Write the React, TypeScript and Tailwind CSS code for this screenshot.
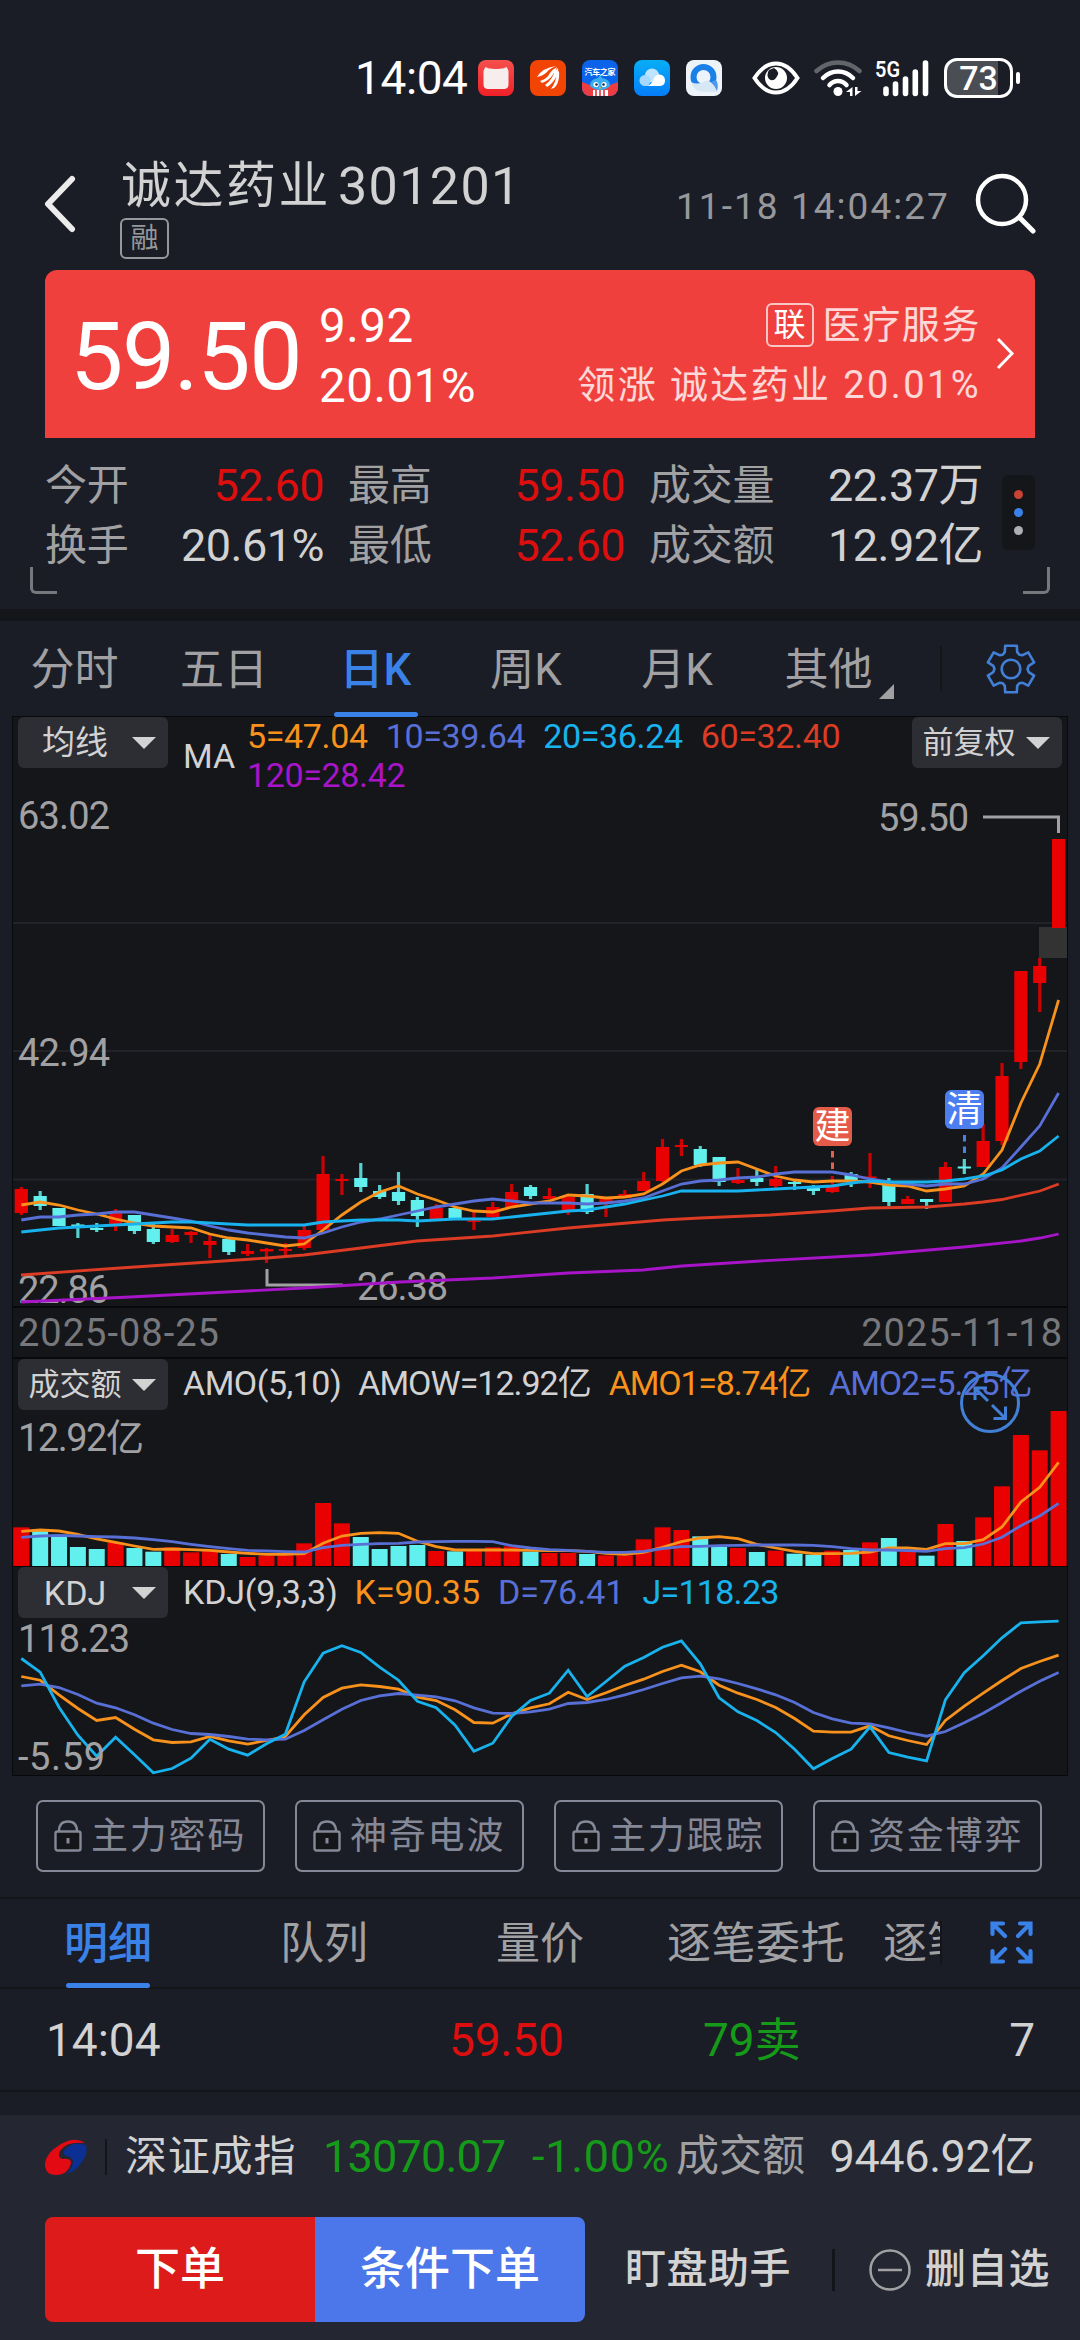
import type { ReactNode } from "react";

const STEP = 18.86;
const FIRST_X = 9.3;

const UP = "#e90000";
const DOWN = "#62f0ee";
const ORANGE = "#f8921c";
const INDIGO = "#5870d6";
const CYAN = "#18b3ee";

// open/close range, then low/high range, in chart pixels
type Candle = [number, number, number, number, "u" | "d"];

const candles: Candle[] = [
  [472, 496, 470, 498, "u"],
  [479, 489, 474, 493, "d"],
  [491, 509, 491, 509, "d"],
  [507.5, 509.5, 506, 521, "d"],
  [511, 513, 506, 515, "d"],
  [496, 508, 492, 514, "u"],
  [498, 514, 498, 517, "d"],
  [512, 525, 505, 527, "d"],
  [518, 525, 512, 526, "u"],
  [515, 518, 514, 526, "u"],
  [524, 528, 516, 541, "u"],
  [522, 535, 522, 538, "d"],
  [534, 537, 527, 539, "u"],
  [532, 534.5, 531, 546, "u"],
  [532, 534, 526, 538, "u"],
  [513, 531, 509, 533, "u"],
  [457, 513, 439, 513, "u"],
  [462, 464, 457, 478, "u"],
  [461, 470, 446, 475, "d"],
  [474, 480, 468, 482, "d"],
  [475, 484, 455, 488, "d"],
  [483, 499, 480, 510, "d"],
  [491, 502, 487, 502, "u"],
  [491, 502, 491, 502, "d"],
  [503.5, 505, 494, 513, "u"],
  [490, 500, 485, 503, "u"],
  [475, 490, 467, 490, "u"],
  [470, 479, 468, 482, "d"],
  [479, 482, 471, 482, "u"],
  [480, 494, 478, 498, "u"],
  [477, 495, 467, 497, "d"],
  [481, 486, 480, 500, "u"],
  [477, 481, 473, 481, "u"],
  [464, 474, 455, 474, "u"],
  [430, 464, 422, 465, "u"],
  [428, 430, 422, 439, "u"],
  [432, 448, 429, 450, "d"],
  [440, 465, 440, 469, "d"],
  [463, 466, 451, 467, "u"],
  [461, 465, 453, 469, "d"],
  [462, 469, 449, 473, "u"],
  [465, 467, 464, 473, "d"],
  [470, 474, 468, 478, "d"],
  [469, 475, 459, 476, "u"],
  [457, 464, 455, 470, "d"],
  [459.5, 461, 436, 471, "u"],
  [468, 485, 461, 489, "d"],
  [482, 487, 479, 487, "u"],
  [482, 485, 482, 492, "d"],
  [450, 485, 445, 485, "u"],
  [449.5, 451.5, 442, 457, "d"],
  [424, 450, 407, 450, "u"],
  [359, 424, 346, 428, "u"],
  [254, 345, 254, 352, "u"],
  [249, 266, 241, 295, "u"],
  [122, 211, 122, 211, "u"],
];

const ma5 = [
  488, 485, 488, 493, 497, 502, 506, 509, 510, 511, 517, 521, 523, 526, 529, 527, 513, 498, 485, 475, 469, 477, 483,
  490, 494, 495, 490, 487, 484, 478, 479, 481, 480, 477, 467, 454, 448, 446, 445, 452, 459, 463, 465, 464, 464, 465,
  468, 469, 474, 472, 469, 457, 433, 386, 347, 283,
];
const ma10 = [
  503, 500, 500, 498, 497, 495, 495, 498, 501, 504, 509, 513, 516, 518, 520, 521, 516, 510, 505, 502, 498, 494, 490,
  487, 484, 482, 484, 486, 486, 486, 487, 486, 484, 481, 474, 467, 464, 463, 461, 460, 457, 455, 455, 455, 458, 462,
  465, 467, 469, 467, 467, 462, 451, 430, 409, 376,
];
const ma20 = [
  515, 513, 511, 510, 509, 508, 507, 506, 505, 505, 506, 507, 508, 508, 508, 508, 505, 504, 503, 503, 503, 504, 503,
  502, 502, 502, 500, 498, 496, 494, 493, 490, 487, 483, 479, 474, 474, 474, 474, 473, 472, 471, 470, 469, 466, 464,
  465, 465, 465, 464, 462, 459, 453, 442, 434, 419,
];

// amount panel, three units to a pixel
const amounts = [
  116, 106, 89, 57, 51, 71, 54, 43, 56, 41, 47, 36, 27, 31, 32, 68, 189, 128, 87, 51, 60, 63, 45, 44, 45, 56, 59, 43,
  39, 39, 36, 32, 32, 80, 116, 108, 89, 57, 54, 42, 46, 37, 34, 46, 48, 71, 84, 43, 31, 126, 75, 146, 239, 393, 347,
  465,
];
const amo1 = [
  104, 108, 105, 95, 81, 71, 60, 50, 51, 49, 47, 42, 38, 35, 35, 37, 68, 90, 98, 100, 98, 74, 58, 48, 48, 48, 48, 47,
  46, 46, 44, 38, 35, 41, 56, 73, 84, 88, 82, 65, 54, 44, 37, 37, 38, 42, 54, 54, 50, 67, 67, 79, 117, 192, 236, 311,
];
const amo2 = [
  86, 90, 92, 90, 88, 87, 84, 79, 73, 65, 58, 52, 47, 45, 43, 42, 55, 62, 65, 67, 68, 72, 73, 74, 74, 73, 61, 54, 49,
  47, 44, 41, 41, 44, 52, 58, 59, 61, 62, 63, 63, 63, 62, 58, 52, 48, 48, 46, 44, 52, 55, 66, 86, 121, 150, 188,
];

const kdjK = [
  330, 341, 385, 426, 462, 453, 488, 520, 528, 526, 510, 523, 533, 522, 510, 445, 393, 365, 355, 360, 368, 392, 402,
  430, 468, 470, 442, 424, 412, 377, 399, 379, 357, 338, 315, 296, 316, 356, 380, 399, 423, 456, 494, 497, 497, 478,
  508, 522, 534, 462, 419, 380, 342, 306, 285, 266,
];
const kdjD = [
  358, 353, 363, 384, 410, 424, 445, 470, 489, 501, 504, 510, 518, 520, 518, 492, 460, 428, 402, 388, 381, 386, 391,
  403, 424, 440, 441, 436, 428, 411, 408, 399, 385, 369, 351, 334, 329, 337, 351, 367, 385, 408, 438, 457, 470, 472,
  484, 498, 509, 495, 469, 440, 408, 374, 344, 318,
];
const kdjJ = [
  276, 317, 422, 506, 569, 512, 565, 619, 606, 575, 518, 548, 566, 532, 503, 346, 260, 238, 258, 302, 341, 404, 424,
  476, 554, 530, 450, 402, 380, 311, 390, 345, 299, 273, 242, 223, 292, 394, 436, 462, 498, 548, 607, 576, 548, 481,
  558, 572, 583, 400, 319, 268, 214, 169, 166, 164,
];

const cx = (i: number) => FIRST_X + i * STEP;

function Line({ data, color, y = (v) => v }: { data: number[]; color: string; y?: (v: number) => number }) {
  const points = data.map((v, i) => `${cx(i).toFixed(1)},${y(v).toFixed(1)}`).join(" ");
  return <polyline points={points} fill="none" stroke={color} strokeWidth={2.8} />;
}

function Label({ x, y, w, color = "#a1a1a4", children }: { x: number; y: number; w: number; color?: string; children: string }) {
  return (
    <text x={x} y={y} textLength={w} fill={color} className="text-[38px]">
      {children}
    </text>
  );
}

function AppIcons() {
  return (
    <div className="flex gap-4">
      <svg className="size-9" viewBox="0 0 36 36">
        <defs>
          <linearGradient id="mall" x1="0" y1="0" x2="0" y2="1">
            <stop offset="0" stopColor="#f5514c" />
            <stop offset="1" stopColor="#ef2028" />
          </linearGradient>
        </defs>
        <rect width="36" height="36" rx="8" fill="url(#mall)" />
        <path d="M7 7.500q1-1 3 .8q8 1.400 16 0q2-1.800 3-.8q2 3 1.500 7v10q0 4-4 4.500H9.500q-4-.5-4-4.500v-10q-.5-4 1.500-7z" fill="#f8eded" />
      </svg>
      <svg className="size-9" viewBox="0 0 36 36">
        <rect width="36" height="36" rx="8" fill="#f24405" />
        <path
          d="M7 17q5-9 19-11q-7 3-9 6q-4 4-10 5zM10 21q7-2 10-8q3-4 7-6q-1 4-5 9q-4 5-10 7zM15 25q7-5 10-14l3-3q1 5-3 11q-4 6-8 8zM21 29q5-7 6-16l2-2q1 9-3 15q-2 3-5 3z"
          fill="#fff"
        />
      </svg>
      <svg className="size-9" viewBox="0 0 36 36">
        <defs>
          <clipPath id="car">
            <rect width="36" height="36" rx="8" />
          </clipPath>
        </defs>
        <g clipPath="url(#car)">
          <rect width="36" height="36" fill="#0a63e8" />
          <path d="M0 22l8 3 10-4 10 4 8-3v14H0z" fill="#ec3d43" />
          <path d="M8 26q0-7 8-8l2-3 2 3q8 1 8 8q-4 4-10 4t-10-4z" fill="#38aef0" />
          <circle cx="14" cy="24.500" r="2.600" fill="#fff" />
          <circle cx="22" cy="24.500" r="2.600" fill="#fff" />
          <circle cx="14.500" cy="24.500" r="1.300" fill="#162c56" />
          <circle cx="21.500" cy="24.500" r="1.300" fill="#162c56" />
          <path d="M17 27h2l-1 2.500z" fill="#f6a51c" />
          <path d="M11 30h15v6H11z" fill="#fff" />
          <path d="M14 30v6M18 30v6M22 30v6" stroke="#e0242f" strokeWidth="1.500" />
          <text x="2.500" y="14.500" textLength="31" fill="#fff" className="text-[8px] font-bold">
            汽车之家
          </text>
        </g>
      </svg>
      <svg className="size-9" viewBox="0 0 36 36">
        <defs>
          <linearGradient id="cloud" x1="0" y1="0" x2="0" y2="1">
            <stop offset="0" stopColor="#08aef6" />
            <stop offset="1" stopColor="#057df8" />
          </linearGradient>
        </defs>
        <rect width="36" height="36" rx="8" fill="url(#cloud)" />
        <circle cx="18" cy="15.500" r="7" fill="#bfe4ff" />
        <circle cx="11" cy="20.500" r="5.500" fill="#a6d9ff" />
        <path d="M12 26q6-1 8-8q2-4 6-3.500q5 1 5 6t-5 5.500z" fill="#fff" />
      </svg>
      <svg className="size-9" viewBox="0 0 36 36">
        <rect width="36" height="36" rx="8" fill="#eef3fa" />
        <circle cx="17.500" cy="17" r="10" fill="none" stroke="#1b7fe8" strokeWidth="6" />
        <path d="M5 22q3 10 13 10h14q-2-5-6-9q-5-4-9-1q-6 3-12 0z" fill="#d8e7f6" />
        <path d="M25 22q4-2 5-2q3 4 1 11q-2-5-6-9z" fill="#4b9af0" />
      </svg>
    </div>
  );
}

function StatusIcons() {
  return (
    <>
      <svg className="ml-[30px] h-9 w-12" viewBox="0 0 48 36">
        <path d="M2.500 18Q12 3.500 24 3.500T45.500 18Q36 32.500 24 32.500T2.500 18z" fill="none" stroke="#fff" strokeWidth="4" />
        <circle cx="24" cy="18" r="11" fill="#fff" />
        <path d="M22 8q7 4 2 10q-3 4-7 1q-3-4 0-9z" fill="#1b1d26" />
      </svg>
      <svg className="ml-[14px] h-9 w-12" viewBox="0 0 48 36" fill="none">
        <path d="M2.500 11q9.500-8.500 21.500-8.500T45.500 11" stroke="#63656b" strokeWidth="4.500" strokeLinecap="round" />
        <path d="M9 18q6.500-6.500 15-6.500T39 18" stroke="#fff" strokeWidth="4.500" strokeLinecap="round" />
        <path d="M15.500 25q3.500-4 8.500-4t8.500 4" stroke="#fff" strokeWidth="4.500" strokeLinecap="round" />
        <circle cx="24" cy="31.500" r="4.500" fill="#fff" />
        <path d="M38.500 27v9h-2.500v-4h-4zM41 36v-9h2.500v4h4z" fill="#fff" />
      </svg>
      <svg className="ml-[13px] h-9 w-[55px] overflow-visible" viewBox="0 0 55 36">
        <text x="0" y="17" textLength="25" lengthAdjust="spacingAndGlyphs" fill="#fff" className="text-[22px] font-semibold">
          5G
        </text>
        <path
          d="M11 29v4.500M20.500 24v9.500M30.500 19v14.500M40.300 12v21.500M50.500 3v30.500"
          stroke="#fff"
          strokeWidth="5.600"
          strokeLinecap="round"
        />
      </svg>
      <div className="ml-[14px] flex h-10 w-[69px] items-center justify-center rounded-[13px] border-[3px] border-white bg-[linear-gradient(90deg,#4b4d54_81%,transparent_81%)] text-[34px] font-medium leading-none">
        73
      </div>
      <span className="ml-[3px] h-3 w-1 rounded-sm bg-white" />
    </>
  );
}

function Header() {
  return (
    <>
      <div className="flex h-[156px] items-center pl-[355px] text-white">
        <span className="w-[123px] text-[46px] leading-none tracking-[-0.4px]">14:04</span>
        <AppIcons />
        <StatusIcons />
      </div>
      <div className="flex h-[114px] pl-[42px]">
        <svg className="mt-[18px] h-[60px] w-9" viewBox="0 0 36 60">
          <path d="M30 5L6 30l24 25" fill="none" stroke="#ececec" strokeWidth="6" strokeLinecap="round" strokeLinejoin="round" />
        </svg>
        <div className="ml-[42px] w-[556px]">
          <div className="flex h-[61px] items-center pl-px text-[#d2d2d3]">
            <span className="text-[50px] tracking-[2.5px]">诚达药业</span>
            <span className="ml-[7px] text-[52px] tracking-[1.400px]">301201</span>
          </div>
          <div className="mt-px flex h-[41px] w-[49px] items-center justify-center rounded-md border-2 border-[#97989c] text-[28px] leading-none text-[#97989c]">
            融
          </div>
        </div>
        <span className="mt-[31px] w-[298px] whitespace-nowrap text-[37px] leading-[40px] tracking-[2.050px] text-[#97989c]">
          11-18 14:04:27
        </span>
        <svg className="mt-[14px] h-16 w-16" viewBox="0 0 64 64">
          <circle cx="28" cy="30" r="24" fill="none" stroke="#fff" strokeWidth="4.500" />
          <path d="M46 48l13 13" stroke="#fff" strokeWidth="5" strokeLinecap="round" />
        </svg>
      </div>
    </>
  );
}

function PriceCard() {
  return (
    <div className="mx-[45px] flex h-[168px] rounded-t-xl bg-[#ef403d] text-white">
      <span className="mt-[3px] w-[274px] pl-[25px] text-[95px] leading-[168px] tracking-[-1.500px]">59.50</span>
      <div className="flex flex-col pt-[26px] text-[47.500px] leading-[60px] tracking-[0.500px]">
        <span>9.92</span>
        <span>20.01%</span>
      </div>
      <div className="ml-auto flex flex-col items-end pt-[25px] text-[38px] leading-[61px] text-white/80">
        <div className="flex h-[60px] items-center">
          <span className="mr-[9px] flex h-11 w-12 items-center justify-center rounded-md border-2 border-white/70 text-[32px] leading-none text-white">
            联
          </span>
          <span className="tracking-[1.600px]">医疗服务</span>
        </div>
        <span className="tracking-[2.400px]">领涨 诚达药业 20.01%</span>
      </div>
      <svg className="ml-[14px] mr-[20px] mt-[63px] h-10 w-5" viewBox="0 0 20 40">
        <path d="M3 6l14 14.500L3 35" fill="none" stroke="#fff" strokeWidth="3" />
      </svg>
    </div>
  );
}

function Stat({ name, value, className }: { name: string; value: string; className: string }) {
  return (
    <div className="flex items-center justify-between">
      <span className="text-[42px] tracking-[-0.3px] text-[#a1a1a4]">{name}</span>
      <span className={`text-[45px] tracking-[-0.5px] ${className}`}>{value}</span>
    </div>
  );
}

function Stats() {
  return (
    <div className="relative h-[171px] pt-[18px]">
      <div className="flex pl-[45px] leading-[60px]">
        <div className="w-[279px]">
          <Stat name="今开" value="52.60" className="text-[#dc0e0e]" />
          <Stat name="换手" value="20.61%" className="text-[#d2d2d3]" />
        </div>
        <div className="ml-6 w-[277px]">
          <Stat name="最高" value="59.50" className="text-[#dc0e0e]" />
          <Stat name="最低" value="52.60" className="text-[#dc0e0e]" />
        </div>
        <div className="ml-6 w-[334px]">
          <Stat name="成交量" value="22.37万" className="text-[#d2d2d3]" />
          <Stat name="成交额" value="12.92亿" className="text-[#d2d2d3]" />
        </div>
        <div className="ml-[19px] mt-[19px] flex h-[75px] w-[33px] flex-col items-center justify-center gap-[9px] rounded-md bg-[#15161a]">
          <span className="size-[9px] rounded-full bg-[#c84335]" />
          <span className="size-[9px] rounded-full bg-[#3b82e8]" />
          <span className="size-[9px] rounded-full bg-[#aeaeb4]" />
        </div>
      </div>
      <span className="absolute left-[30px] top-[129px] h-[27px] w-[27px] rounded-bl-md border-b-[3px] border-l-[3px] border-[#77787d]" />
      <span className="absolute right-[30px] top-[129px] h-[27px] w-[27px] rounded-br-md border-b-[3px] border-r-[3px] border-[#77787d]" />
    </div>
  );
}

function Gear() {
  const teeth = [];
  for (let i = 0; i < 6; i++) {
    const at = (deg: number, r: number) => {
      const a = ((i * 60 + deg - 90) * Math.PI) / 180;
      return `${(25 + Math.cos(a) * r).toFixed(1)},${(25 + Math.sin(a) * r).toFixed(1)}`;
    };
    teeth.push(at(-14, 24), at(14, 24), at(20, 18), at(30, 16.5), at(40, 18));
  }
  return (
    <svg className="size-[50px]" viewBox="0 0 50 50" fill="none" stroke="#4280d8" strokeWidth="2.600" strokeLinejoin="round">
      <polygon points={teeth.join(" ")} />
      <circle cx="25" cy="25" r="9.300" />
    </svg>
  );
}

function PeriodTabs() {
  return (
    <div className="flex h-[95px] text-[44px] leading-[98px] text-[#a1a1a4]">
      <span className="w-[149px] text-center">分时</span>
      <span className="w-[150px] text-center">五日</span>
      <div className="flex w-[153px] flex-col items-center font-medium text-[#3b82e8]">
        <span className="h-[91px]">日K</span>
        <span className="h-[5px] w-[84px] shrink-0 rounded-sm bg-[#3b82e8]" />
      </div>
      <span className="w-[148px] text-center">周K</span>
      <span className="w-[154px] text-center">月K</span>
      <span className="w-[149px] text-center">其他</span>
      <svg className="-ml-6 mt-[63px] size-[15px]" viewBox="0 0 15 15">
        <path d="M15 0v15H0z" fill="#a1a1a4" />
      </svg>
      <span className="ml-[46px] mt-[25px] h-[45px] w-[2px] bg-[#15161a]" />
      <div className="ml-[44px] mt-[23px]">
        <Gear />
      </div>
    </div>
  );
}

function Picker({ className, children }: { className: string; children: ReactNode }) {
  return (
    <div className={`flex h-[51px] w-[150px] shrink-0 items-center rounded-md bg-[#2d2e33] pr-3 leading-none text-[#d2d2d3] ${className}`}>
      <span className="flex-1 text-center">{children}</span>
      <svg className="h-3 w-6" viewBox="0 0 24 12">
        <path d="M0 0h24L12 12z" fill="#d2d2d3" />
      </svg>
    </div>
  );
}

function PricePanel() {
  return (
    <div className="relative h-[591px] border-b-2 border-[#08090b]">
      <svg className="absolute -left-px top-0 h-[591px] w-[1055px] overflow-visible" viewBox="0 0 1055 591">
        <path d="M1 206h1054M1 334h1054M1 462.500h1054" stroke="#222328" strokeWidth="2" />
        <rect x="1027" y="210" width="28" height="31" fill="#333334" />
        <Label x={345} y={583} w={91}>
          26.38
        </Label>
        {candles.map(([top, bottom, high, low, dir], i) => {
          const fill = dir === "u" ? UP : DOWN;
          return (
            <g key={i} fill={fill}>
              <rect x={cx(i) - 1.6} y={high} width={3.2} height={low - high} opacity={0.85} />
              <rect x={cx(i) - 6.6} y={top} width={13.2} height={bottom - top} />
            </g>
          );
        })}
        <path d="M255 552v16h76" fill="none" stroke="#a1a1a4" strokeWidth="3" />
        <path d="M971 100h75.500v16" fill="none" stroke="#a1a1a4" strokeWidth="3" />
        <Label x={6} y={586} w={91}>
          22.86
        </Label>
        <Line data={ma5} color={ORANGE} />
        <Line data={ma10} color={INDIGO} />
        <Line data={ma20} color={CYAN} />
        <polyline
          points="9,558 108,551 197,545 255,541 292,538 349,531 405,524 481,519 556,511 651,503 688,501 758,498 819,494 858,491 915,490 952,487 971,485 990,482.500 1028,474 1046.700,467"
          fill="none"
          stroke="#dc3c24"
          strokeWidth="2.800"
        />
        <polyline
          points="9,585 118,580 292,571 388,565 481,561 556,556 631,553 670,549 748,544 858,538 952,530 1009,524 1028,521 1046.700,517"
          fill="none"
          stroke="#a814c8"
          strokeWidth="2.800"
        />
        <path d="M820.500 434v20" stroke="#e2604c" strokeWidth="3" strokeDasharray="6.500 5" />
        <path d="M952.500 418v20" stroke="#4c7ef0" strokeWidth="3" strokeDasharray="6.500 5" />
        <Label x={6} y={112} w={92}>
          63.02
        </Label>
        <Label x={6} y={349} w={92}>
          42.94
        </Label>
        <Label x={866} y={114} w={91}>
          59.50
        </Label>
      </svg>
      <span className="absolute left-[800px] top-[390px] flex size-[39px] items-center justify-center rounded-md bg-[#e55b49] text-[36px] leading-none text-white">
        建
      </span>
      <span className="absolute left-[932px] top-[373px] flex size-[39px] items-center justify-center rounded-md bg-[#4c7ef0] text-[36px] leading-none text-white">
        清
      </span>
      <div className="relative flex pl-[5px] pr-[5px] text-[34px] leading-[39px]">
        <Picker className="text-[33px]">均线</Picker>
        <span className="ml-[15px] mt-5 w-[64px] text-[#d2d2d3]">MA</span>
        <div className="flex w-[620px] flex-wrap gap-x-[18px] tracking-[-0.350px]">
          <span className="text-[#f8921c]">5=47.04</span>
          <span className="text-[#5870d6]">10=39.64</span>
          <span className="text-[#18b3ee]">20=36.24</span>
          <span className="text-[#dc3c24]">60=32.40</span>
          <span className="text-[#a814c8]">120=28.42</span>
        </div>
        <Picker className="ml-auto text-[31px]">前复权</Picker>
      </div>
    </div>
  );
}

function AmountPanel() {
  return (
    <div className="relative h-[208px] border-b-2 border-[#08090b]">
      <svg className="absolute -left-px top-0 h-[207px] w-[1055px]" viewBox="0 0 1055 207">
        <Label x={6} y={92} w={126}>
          12.92亿
        </Label>
        {amounts.map((v, i) => (
          <rect key={i} x={cx(i) - 8} y={207 - v / 3} width={16} height={v / 3} fill={candles[i][4] === "u" ? UP : DOWN} />
        ))}
        <Line data={amo1} color={ORANGE} y={(v) => 207 - v / 3} />
        <Line data={amo2} color={INDIGO} y={(v) => 207 - v / 3} />
      </svg>
      <div className="relative flex whitespace-nowrap pl-[5px] text-[34px] leading-[49px]">
        <Picker className="text-[31px]">成交额</Picker>
        <span className="ml-[15px] tracking-[-0.5px] text-[#d2d2d3]">AMO(5,10)</span>
        <span className="ml-[17px] tracking-[-1px] text-[#d2d2d3]">AMOW=12.92亿</span>
        <span className="ml-[18px] tracking-[-1.200px] text-[#f8921c]">AMO1=8.74亿</span>
        <span className="ml-[19px] tracking-[-1.100px] text-[#5870d6]">AMO2=5.25亿</span>
      </div>
      <svg className="absolute left-[947px] top-[14px] size-[60px]" viewBox="0 0 60 60" fill="none" stroke="#4280d8" strokeWidth="3">
        <circle cx="30" cy="30" r="28.500" />
        <path d="M28 28L15 15M15 27V15h12M32 32l13.500 13.500M45.500 33.500v12h-12" />
      </svg>
    </div>
  );
}

function KdjPanel() {
  const y = (v: number) => v / 3 - 0.5;
  return (
    <div className="relative h-[208px]">
      <svg className="absolute -left-px top-0 h-[208px] w-[1055px] overflow-visible" viewBox="0 0 1055 208">
        <Label x={6} y={85} w={112}>
          118.23
        </Label>
        <Line data={kdjK} color={ORANGE} y={y} />
        <Line data={kdjD} color={INDIGO} y={y} />
        <Line data={kdjJ} color={CYAN} y={y} />
        <Label x={6} y={202.500} w={87}>
          -5.59
        </Label>
      </svg>
      <div className="relative flex pl-[5px] text-[34px] leading-[51px]">
        <Picker className="text-[34px]">KDJ</Picker>
        <span className="ml-[15px] tracking-[-0.200px] text-[#d2d2d3]">KDJ(9,3,3)</span>
        <span className="ml-[17px] text-[#f8921c]">K=90.35</span>
        <span className="ml-[18px] text-[#5870d6]">D=76.41</span>
        <span className="ml-[18px] tracking-[-0.700px] text-[#18b3ee]">J=118.23</span>
      </div>
    </div>
  );
}

function Chart() {
  return (
    <div className="mx-3 h-[1060px] w-[1056px] border border-[#08090b] bg-[#15161a]">
      <PricePanel />
      <div className="flex h-[51px] items-center justify-between border-b-2 border-[#08090b] pl-[5px] pr-[4px] pt-px text-[38px] leading-none tracking-[1px] text-[#77787c]">
        <span>2025-08-25</span>
        <span>2025-11-18</span>
      </div>
      <AmountPanel />
      <KdjPanel />
    </div>
  );
}

function LockedButtons() {
  return (
    <div className="flex gap-[30px] px-9 pb-[25px] pt-6">
      {["主力密码", "神奇电波", "主力跟踪", "资金博弈"].map((name) => (
        <div
          key={name}
          className="flex h-[72px] w-[229px] items-center rounded-[7px] border-2 border-[#858896] pl-4 text-[37px] leading-none tracking-[1.800px] text-[#858896]"
        >
          <svg className="mr-[9px] h-8 w-7 shrink-0" viewBox="0 0 28 32" stroke="#858896" strokeWidth="2.400">
            <path d="M5 11.500Q5 1.500 14 1.500t9 10" fill="none" />
            <rect x="1.500" y="11.500" width="25" height="19" rx="2" fill="#15161a" />
            <path d="M14 18v5.500" strokeWidth="3" />
          </svg>
          <span className="whitespace-nowrap pt-px">{name}</span>
        </div>
      ))}
    </div>
  );
}

function DetailTabs() {
  return (
    <div className="flex h-[92px] border-y-2 border-[#14151b] text-[44px] leading-[90px] text-[#a1a1a4]">
      <div className="flex w-[216px] flex-col items-center font-medium text-[#3b82e8]">
        <span className="h-[84px]">明细</span>
        <span className="h-[5px] w-[84px] shrink-0 rounded-sm bg-[#3b82e8]" />
      </div>
      <span className="w-[216px] text-center">队列</span>
      <span className="w-[216px] text-center">量价</span>
      <span className="w-[216px] text-center tracking-[0.500px]">逐笔委托</span>
      <span className="ml-[19px] w-[57px] overflow-hidden whitespace-nowrap">逐笔成交</span>
      <span className="mt-[22px] h-11 w-[2px] bg-[#14151b]" />
      <svg className="ml-12 mt-[22px] size-[43px]" viewBox="0 0 43 43" fill="none" stroke="#3b82e8" strokeWidth="4.200" strokeLinecap="round">
        <path d="M2.500 13V2.500H13M3 3l12 12M30 2.500h10.500V13M40 3L28 15M2.500 30v10.500H13M3 40l12-12M30 40.500h10.500V30M40 40L28 28" />
      </svg>
    </div>
  );
}

function BottomBar() {
  return (
    <div className="h-[225px] bg-[#242631]">
      <div className="flex h-[102px] items-center whitespace-nowrap pb-[19px] pl-[45px] text-[45px] text-[#d2d2d3]">
        <svg className="h-9 w-[42px]" viewBox="0 0 42 36">
          <path
            d="M40 4Q30-3 16 5Q-1 15 0 27q1 9 11 9q12 0 15-12q0-5-8-4q-6-1-3-8Q21 2 40 4z"
            fill="#e30a14"
          />
          <path d="M41 6q2 8-3 15q-6 11-16 14q6-7 6-13q-1-4-6-5q-5-1-3-5q8-11 22-6z" fill="#0b2f92" />
        </svg>
        <span className="ml-[18px] h-9 w-[2px] bg-[#14151b]" />
        <span className="ml-[18px] w-[198px] text-[42px] tracking-[0.8px]">深证成指</span>
        <span className="w-[209px] tracking-[-0.800px] text-[#159a1a]">13070.07</span>
        <span className="w-[144px] tracking-[0.700px] text-[#159a1a]">-1.00%</span>
        <span className="text-[43px] text-[#a1a1a4]">成交额</span>
        <span className="ml-auto mr-[45px] tracking-[-0.4px]">9446.92亿</span>
      </div>
      <div className="flex h-[105px] items-center pl-[45px] text-[41px] font-medium text-[#d2d2d3]">
        <div className="flex h-full w-[270px] items-center justify-center rounded-l-lg bg-[#dc1b1a] pt-px text-[45px] text-white">
          下单
        </div>
        <div className="flex h-full w-[270px] items-center justify-center rounded-r-lg bg-[#4b77ea] pt-px text-[45px] text-white">
          条件下单
        </div>
        <span className="ml-10 w-[207px] tracking-[0.500px]">盯盘助手</span>
        <span className="h-[42px] w-[3px] bg-[#14151b]" />
        <svg className="ml-[34px] size-[42px]" viewBox="0 0 42 42" fill="none" stroke="#a1a1a4" strokeWidth="2.500">
          <path d="M9 21h24" />
          <circle cx="21" cy="21" r="19.500" />
        </svg>
        <span className="ml-[14px] tracking-[0.800px]">删自选</span>
      </div>
    </div>
  );
}

export default function App() {
  return (
    <div className="h-[2340px] w-[1080px] overflow-hidden bg-[#1b1d26] font-[Roboto,'Noto_Sans_CJK_SC',sans-serif]">
      <Header />
      <PriceCard />
      <Stats />
      <div className="h-3 bg-[#15161a]" />
      <PeriodTabs />
      <Chart />
      <LockedButtons />
      <DetailTabs />
      <div className="flex h-[103px] items-center border-b-2 border-[#14151b] text-[46px] leading-none text-[#d2d2d3]">
        <span className="w-[449px] pl-[46px]">14:04</span>
        <span className="w-[254px] tracking-[-0.200px] text-[#dc0e0e]">59.50</span>
        <span className="text-[#159a1a]">79卖</span>
        <span className="ml-auto mr-[45px]">7</span>
      </div>
      <div className="h-[23px]" />
      <BottomBar />
    </div>
  );
}
